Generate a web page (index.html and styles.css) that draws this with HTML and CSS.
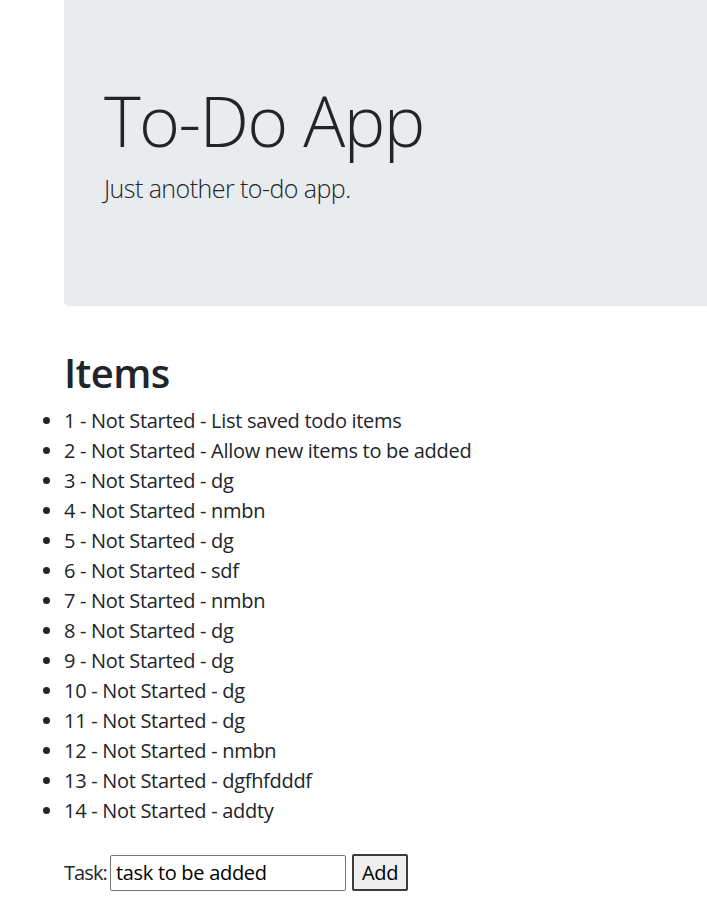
FILE: index.html
```html
<!DOCTYPE html>
<html lang="en">
<head>
<meta charset="utf-8">
<title>To-Do App</title>
<link rel="stylesheet" href="styles.css">
</head>
<body>
<div class="jumbotron">
  <h1 class="display">To-Do App</h1>
  <p class="lead">Just another to-do app.</p>
</div>
<div class="items">
  <h2 class="items-title">Items</h2>
  <ul class="item-list">
    <li>1 - Not Started - List saved todo items</li>
    <li>2 - Not Started - Allow new items to be added</li>
    <li>3 - Not Started - dg</li>
    <li>4 - Not Started - nmbn</li>
    <li>5 - Not Started - dg</li>
    <li>6 - Not Started - sdf</li>
    <li>7 - Not Started - nmbn</li>
    <li>8 - Not Started - dg</li>
    <li>9 - Not Started - dg</li>
    <li>10 - Not Started - dg</li>
    <li>11 - Not Started - dg</li>
    <li>12 - Not Started - nmbn</li>
    <li>13 - Not Started - dgfhfdddf</li>
    <li>14 - Not Started - addty</li>
  </ul>
  <form class="add-form">
    <label class="task-label" for="task">Task:</label>
    <input class="task-input" id="task" type="text" value="task to be added">
    <button class="add-btn" type="button">Add</button>
  </form>
</div>
</body>
</html>
```
FILE: styles.css
```css
html, body {
  margin: 0;
  padding: 0;
  background: #fff;
}
body {
  font-family: "Open Sans", "Noto Sans", sans-serif;
  font-size: 20px;
  line-height: 1.5;
  letter-spacing: -0.3px;
  color: #212529;
}
.jumbotron {
  margin-left: 64px;
  background: #e9ecef;
  border-radius: 0 0 0 5px;
  padding: 78px 40px 0;
  height: 228px;
}
.display {
  margin: 0;
  font-size: 70px;
  font-weight: 300;
  line-height: 84px;
  letter-spacing: -1.6px;
}
.lead {
  margin: 8px 0 0;
  font-size: 25px;
  font-weight: 300;
  line-height: 37px;
  letter-spacing: -0.55px;
}
.items {
  padding-top: 43px;
}
.items-title {
  margin: 0 0 9px 64px;
  font-size: 40px;
  font-weight: 600;
  line-height: 48px;
  letter-spacing: -0.6px;
}
.item-list {
  margin: 0;
  padding-left: 64px;
}
.item-list li {
  line-height: 30px;
}
.add-form {
  margin: 28px 0 0 64px;
  display: flex;
  align-items: center;
  gap: 4px;
}
.task-label {
  font-size: 20px;
  letter-spacing: -0.9px;
  margin-right: -1px;
}
.task-input {
  font: inherit;
  letter-spacing: -0.3px;
  color: #000;
  width: 236px;
  height: 36px;
  box-sizing: border-box;
  border: 1px solid #767676;
  border-radius: 2px;
  padding: 1px 5px;
  margin: 0;
}
.add-btn {
  font: inherit;
  letter-spacing: -0.3px;
  color: #000;
  height: 37px;
  box-sizing: border-box;
  margin-left: 2px;
  padding: 0 8px;
  background: #efefef;
  border: 2px solid #3b3b3b;
  border-radius: 2px;
}
```
